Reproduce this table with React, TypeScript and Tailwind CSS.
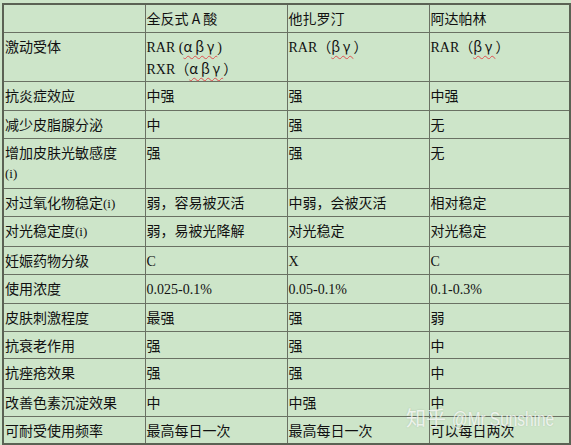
const rows: { h: string; cells: React.ReactNode[] }[] = [
  { h: "h-[28px]", cells: ["", "全反式 A 酸", "他扎罗汀", "阿达帕林"] },
  {
    h: "h-[49px]",
    cells: [
      "激动受体",
      <>
        <div>
          <Lat>RAR (</Lat>
          <Greek>αβγ</Greek>
          <Lat>)</Lat>
        </div>
        <div>
          <Lat>RXR</Lat>（<Greek>αβγ</Greek>）
        </div>
      </>,
      <>
        <Lat>RAR</Lat>（<Greek>βγ</Greek>）
      </>,
      <>
        <Lat>RAR</Lat>（<Greek>βγ</Greek>）
      </>,
    ],
  },
  { h: "h-[29px]", cells: ["抗炎症效应", "中强", "强", "中强"] },
  { h: "h-[28px]", cells: ["减少皮脂腺分泌", "中", "强", "无"] },
  {
    h: "h-[50px]",
    cells: [
      <>
        <div>增加皮肤光敏感度</div>
        <div className="font-['Liberation_Serif',serif] text-[13px]">(i)</div>
      </>,
      "强",
      "强",
      "无",
    ],
  },
  {
    h: "h-[28px]",
    cells: [
      <>
        对过氧化物稳定<Small>(i)</Small>
      </>,
      "弱，容易被灭活",
      "中弱，会被灭活",
      "相对稳定",
    ],
  },
  {
    h: "h-[30px]",
    cells: [
      <>
        对光稳定度<Small>(i)</Small>
      </>,
      "弱，易被光降解",
      "对光稳定",
      "对光稳定",
    ],
  },
  { h: "h-[28px]", cells: ["妊娠药物分级", <Lat>C</Lat>, <Lat>X</Lat>, <Lat>C</Lat>] },
  {
    h: "h-[29px]",
    cells: ["使用浓度", <Lat>0.025-0.1%</Lat>, <Lat>0.05-0.1%</Lat>, <Lat>0.1-0.3%</Lat>],
  },
  { h: "h-[28px]", cells: ["皮肤刺激程度", "最强", "强", "弱"] },
  { h: "h-[27px]", cells: ["抗衰老作用", "强", "强", "中"] },
  { h: "h-[30px]", cells: ["抗痤疮效果", "强", "强", "中"] },
  { h: "h-[28px]", cells: ["改善色素沉淀效果", "中", "中强", "中"] },
  { h: "h-[28px]", cells: ["可耐受使用频率", "最高每日一次", "最高每日一次", "可以每日两次"] },
];

function Greek({ children }: { children: string }) {
  return (
    <span className="tracking-[3px] underline decoration-wavy decoration-[#e05050] decoration-1 underline-offset-[3px]">
      {children}
    </span>
  );
}

function Small({ children }: { children: string }) {
  return <span className="font-['Liberation_Serif',serif] text-[13px]">{children}</span>;
}

function Lat({ children }: { children: string }) {
  return <span className="font-['Liberation_Serif',serif] text-[14px]">{children}</span>;
}

export default function App() {
  return (
    <div className="relative w-[571px] h-[445px] bg-[#cde5c9] pt-[3px] pl-[2px] overflow-hidden font-['Noto_Sans_CJK_SC',sans-serif] text-[14px] text-[#111]">
      <table className="border-collapse table-fixed border-2 border-[#5b6254]">
        <colgroup>
          <col className="w-[142px]" />
          <col className="w-[142px]" />
          <col className="w-[142px]" />
          <col className="w-[141px]" />
        </colgroup>
        <tbody>
          {rows.map((row, i) => (
            <tr key={i} className={row.h}>
              {row.cells.map((cell, j) => (
                <td
                  key={j}
                  className={
                    "border border-[#6a7163] pl-[1px] leading-[21px] " +
                    (i === 0 ? "align-middle" : "align-top pt-[3px]")
                  }
                >
                  {cell}
                </td>
              ))}
            </tr>
          ))}
        </tbody>
      </table>
      <div className="absolute left-[406px] top-[408px] flex items-baseline text-[20px] leading-none text-white/75 [text-shadow:0_0_2px_rgba(0,0,0,0.15)] whitespace-nowrap">
        <span className="font-['Noto_Sans_CJK_SC',sans-serif]">知乎</span>
        <span className="ml-[6px] inline-block origin-left scale-x-[0.77] font-['Liberation_Sans',sans-serif]">
          @Mr Sunshine
        </span>
      </div>
    </div>
  );
}
